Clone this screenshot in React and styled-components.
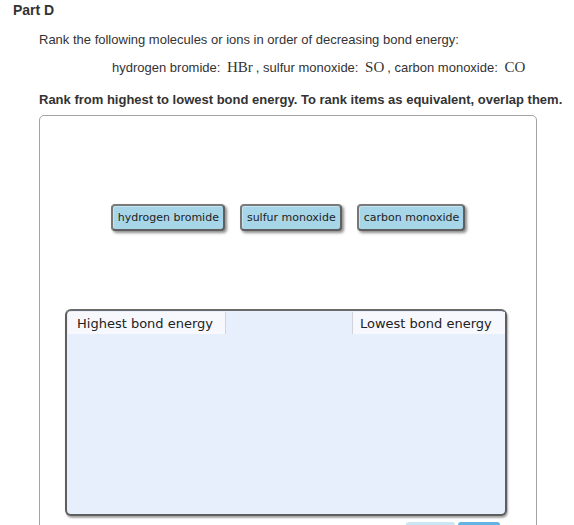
import React from "react";
import styled, { createGlobalStyle } from "styled-components";

const Global = createGlobalStyle`
  html, body { margin: 0; padding: 0; background: #fff; }
  body { font-family: "Liberation Sans", Arial, sans-serif; color: #333; overflow: hidden; }
`;

const Page = styled.div`
  width: 574px;
  height: 525px;
  overflow: hidden;
  padding: 2px 0 0 13px;
  box-sizing: border-box;
`;

const Title = styled.h2`
  margin: 0;
  font-size: 14px;
  font-weight: bold;
  line-height: 16px;
  color: #333;
`;

const Body = styled.div`
  padding-left: 26px;
`;

const Para = styled.p`
  margin: 14px 0 0;
  font-size: 13px;
  line-height: 16px;
  color: #333;
`;

const Molecules = styled(Para)`
  margin-top: 11px;
  padding-left: 73px;
`;

const Formula = styled.span`
  font-family: "Liberation Serif", "Times New Roman", serif;
  font-size: 15px;
  margin: 0 3px;
`;

const Instruction = styled(Para)`
  margin-top: 16px;
  font-weight: bold;
`;

const Board = styled.div`
  margin-top: 7px;
  width: 498px;
  height: 460px;
  box-sizing: border-box;
  border: 1px solid #a3a3a3;
  border-radius: 5px;
  padding-top: 88px;
  display: flex;
  flex-direction: column;
  align-items: center;
`;

const Pool = styled.div`
  display: flex;
  flex-shrink: 0;
  gap: 15px;
  justify-content: center;
`;

const Chip = styled.div`
  height: 27px;
  box-sizing: border-box;
  padding: 0 4px 0 5px;
  display: flex;
  align-items: center;
  background: #a8d6e9;
  border: 2px solid #5f5f5f;
  border-top-color: #7a7a7a;
  border-left-color: #777;
  border-radius: 4px;
  box-shadow: 2px 2px 3px rgba(0, 0, 0, 0.45), inset 1px 1px 0 rgba(255,255,255,0.35);
  font-family: "DejaVu Sans", Verdana, sans-serif;
  font-size: 11px;
  color: #222;
  white-space: nowrap;
`;

const Ranking = styled.div`
  flex-shrink: 0;
  margin-top: 78px;
  width: 442px;
  height: 207px;
  box-sizing: border-box;
  border: 2px solid #5e5e5e;
  border-top-color: #6a6a6a;
  border-radius: 6px;
  background: #e7eefc;
  box-shadow: 1px 2px 2px rgba(0, 0, 0, 0.35);
  margin-left: -4px;
  padding-top: 1px;
  padding-left: 1px;
`;

const Header = styled.div`
  display: flex;
  justify-content: space-between;
  height: 22px;
`;

const Label = styled.div`
  height: 22px;
  box-sizing: border-box;
  background: #f6f8fd;
  display: flex;
  align-items: center;
  padding-left: ${p => p.$padLeft}px;
  width: ${p => p.$w}px;
  font-family: "DejaVu Sans", Verdana, sans-serif;
  font-size: 13px;
  color: #222;
  white-space: nowrap;
  border-${p => p.$side}: 1px solid #cfd3da;
`;

const Footer = styled.div`
  flex-shrink: 0;
  align-self: stretch;
  display: flex;
  justify-content: flex-end;
  gap: 3px;
  padding-right: 36px;
  margin-top: 6px;
`;

const FootButton = styled.div`
  width: ${p => p.$w}px;
  height: 20px;
  border-radius: 3px;
  background: ${p => p.$bg};
`;

export default function App() {
  return (
    <>
      <Global />
      <Page>
        <Title>Part D</Title>
        <Body>
          <Para>Rank the following molecules or ions in order of decreasing bond energy:</Para>
          <Molecules>
            hydrogen bromide: <Formula>HBr</Formula>, sulfur monoxide: <Formula>SO</Formula>, carbon monoxide: <Formula>CO</Formula>
          </Molecules>
          <Instruction>
            Rank from highest to lowest bond energy. To rank items as equivalent, overlap them.
          </Instruction>
          <Board>
            <Pool>
              <Chip>hydrogen bromide</Chip>
              <Chip>sulfur monoxide</Chip>
              <Chip>carbon monoxide</Chip>
            </Pool>
            <Ranking>
              <Header>
                <Label $w={158} $padLeft={9} $side="right">Highest bond energy</Label>
                <Label $w={153} $padLeft={7} $side="left">Lowest bond energy</Label>
              </Header>
            </Ranking>
            <Footer>
              <FootButton $w={49} $bg="#cbe6f4" />
              <FootButton $w={42} $bg="#62b5e2" />
            </Footer>
          </Board>
        </Body>
      </Page>
    </>
  );
}
